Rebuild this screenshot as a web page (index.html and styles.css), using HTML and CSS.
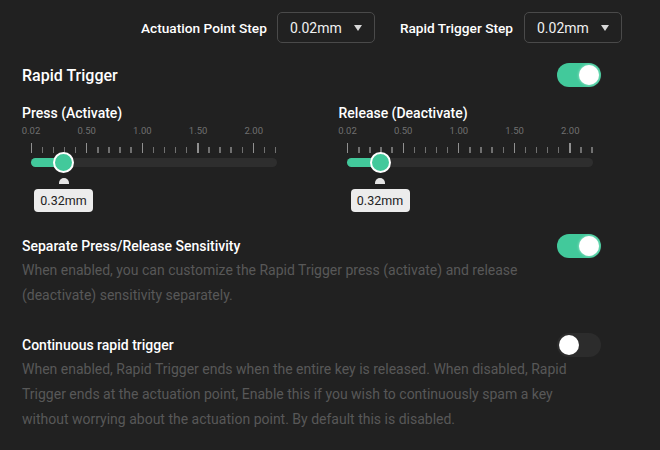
FILE: index.html
```html
<!DOCTYPE html>
<html>
<head>
<meta charset="utf-8">
<link rel="stylesheet" href="styles.css">
</head>
<body>
<div class="page">
  <div class="topbar">
    <span class="top-label">Actuation Point Step</span>
    <div class="select"><span>0.02mm</span><span class="caret"></span></div>
    <span class="top-label second">Rapid Trigger Step</span>
    <div class="select"><span>0.02mm</span><span class="caret"></span></div>
  </div>

  <div class="section">
    <div class="row">
      <span class="title-lg">Rapid Trigger</span>
      <span class="toggle on"><span class="knob"></span></span>
    </div>

    <div class="sliders">
      <div class="slider-col">
        <div class="slider-title">Press (Activate)</div>
        <div class="slider">
          <div class="scale"><span>0.02</span><span>0.50</span><span>1.00</span><span>1.50</span><span>2.00</span></div>
          <div class="ticks">
            <i class="major"></i><i></i><i></i><i></i><i></i>
            <i class="major"></i><i></i><i></i><i></i><i></i>
            <i class="major"></i><i></i><i></i><i></i><i></i>
            <i class="major"></i><i></i><i></i><i></i><i></i>
            <i class="major"></i><i></i><i></i>
          </div>
          <div class="track">
            <div class="fill" style="width: 33px"></div>
            <div class="thumb" style="left: 33px"></div>
          </div>
          <div class="value" style="margin-left: 3.5px">
            <span class="value-arrow"></span>
            <span class="value-box">0.32mm</span>
          </div>
        </div>
      </div>
      <div class="slider-col">
        <div class="slider-title">Release (Deactivate)</div>
        <div class="slider">
          <div class="scale"><span>0.02</span><span>0.50</span><span>1.00</span><span>1.50</span><span>2.00</span></div>
          <div class="ticks">
            <i class="major"></i><i></i><i></i><i></i><i></i>
            <i class="major"></i><i></i><i></i><i></i><i></i>
            <i class="major"></i><i></i><i></i><i></i><i></i>
            <i class="major"></i><i></i><i></i><i></i><i></i>
            <i class="major"></i><i></i><i></i>
          </div>
          <div class="track">
            <div class="fill" style="width: 33px"></div>
            <div class="thumb" style="left: 33px"></div>
          </div>
          <div class="value" style="margin-left: 3.5px">
            <span class="value-arrow"></span>
            <span class="value-box">0.32mm</span>
          </div>
        </div>
      </div>
    </div>

    <div class="setting first">
      <div class="row">
        <span class="title-md">Separate Press/Release Sensitivity</span>
        <span class="toggle on"><span class="knob"></span></span>
      </div>
      <p class="desc">When enabled, you can customize the Rapid Trigger press (activate) and release (deactivate) sensitivity separately.</p>
    </div>

    <div class="setting">
      <div class="row">
        <span class="title-md">Continuous rapid trigger</span>
        <span class="toggle"><span class="knob"></span></span>
      </div>
      <p class="desc">When enabled, Rapid Trigger ends when the entire key is released. When disabled, Rapid Trigger ends at the actuation point, Enable this if you wish to continuously spam a key without worrying about the actuation point. By default this is disabled.</p>
    </div>
  </div>
</div>
</body>
</html>
```

FILE: styles.css
```css
* { box-sizing: border-box; }

body {
  margin: 0;
  background: #212121;
  color: #ffffff;
  font-family: Roboto, "Liberation Sans", sans-serif;
}

.page {
  padding: 12px 38px 0 22px;
}

.topbar {
  display: flex;
  justify-content: flex-end;
  align-items: center;
  height: 31px;
}

.top-label {
  font-size: 13.7px;
  font-weight: 500;
  margin-right: 10px;
}

.top-label.second {
  margin-left: 25px;
  margin-right: 11px;
}

.select {
  width: 98px;
  height: 31px;
  border: 1px solid #4a4a4a;
  border-radius: 5px;
  display: flex;
  align-items: center;
  justify-content: space-between;
  padding: 0 12px 0 12px;
  font-size: 14px;
  color: #f0f0f0;
}

.caret {
  width: 0;
  height: 0;
  border-left: 4px solid transparent;
  border-right: 4px solid transparent;
  border-top: 6px solid #d8d8d8;
}

.section {
  padding-right: 21px;
  margin-top: 20px;
}

.row {
  display: flex;
  justify-content: space-between;
  align-items: center;
  height: 24px;
}

.title-lg {
  font-size: 16px;
  font-weight: 500;
}

.title-md {
  font-size: 14px;
  font-weight: 500;
}

.toggle {
  position: relative;
  width: 44px;
  height: 24px;
  border-radius: 12px;
  background: #2c2c2c;
  display: flex;
  align-items: center;
  padding: 0 2px;
}

.toggle.on {
  background: #42c99b;
  justify-content: flex-end;
}

.knob {
  width: 20px;
  height: 20px;
  border-radius: 50%;
  background: #ffffff;
}

.toggle.on .knob {
  box-shadow: 0 0 3px rgba(255, 255, 255, 0.6);
}

.sliders {
  display: grid;
  grid-template-columns: 316.5px 1fr;
  margin-top: 18px;
}

.slider-title {
  font-size: 14px;
  font-weight: 500;
  line-height: 17px;
}

.slider {
  padding-left: 8.5px;
}

.scale {
  display: flex;
  justify-content: space-between;
  width: 246.8px;
  margin-left: -11.5px;
  margin-top: 3px;
  height: 12px;
  line-height: 12px;
  font-size: 9.5px;
  color: #707070;
}

.scale span {
  width: 24px;
  text-align: center;
}

.ticks {
  display: flex;
  justify-content: space-between;
  align-items: flex-end;
  width: 246px;
  height: 10px;
  margin-top: 6px;
}

.ticks i {
  display: block;
  width: 1.4px;
  height: 6px;
  background: #707070;
}

.ticks i.major {
  height: 10px;
  background: #909090;
}

.track {
  position: relative;
  width: 246px;
  height: 9px;
  margin-top: 5px;
  border-radius: 5px;
  background: #2e2e2e;
}

.fill {
  height: 100%;
  border-radius: 5px 0 0 5px;
  background: #42c99b;
}

.thumb {
  position: absolute;
  top: 50%;
  width: 21px;
  height: 21px;
  margin-left: -10.5px;
  margin-top: -10.5px;
  border-radius: 50%;
  background: #42c99b;
  border: 2.5px solid #ffffff;
}

.value {
  display: flex;
  flex-direction: column;
  align-items: center;
  width: 59px;
  margin-top: 11px;
}

.value-arrow {
  width: 10px;
  height: 6px;
  border-radius: 5px 5px 0 0;
  background: #e6e6e6;
}

.value-box {
  margin-top: 5px;
  width: 59px;
  height: 23px;
  line-height: 23px;
  border-radius: 4px;
  background: #ececec;
  color: #222222;
  font-size: 12.5px;
  font-weight: 400;
  text-align: center;
}

.setting.first {
  margin-top: 22px;
}

.setting {
  margin-top: 24.5px;
}

.desc {
  margin: 0;
  max-width: 560px;
  font-size: 14px;
  line-height: 25px;
  color: #585858;
}
```
